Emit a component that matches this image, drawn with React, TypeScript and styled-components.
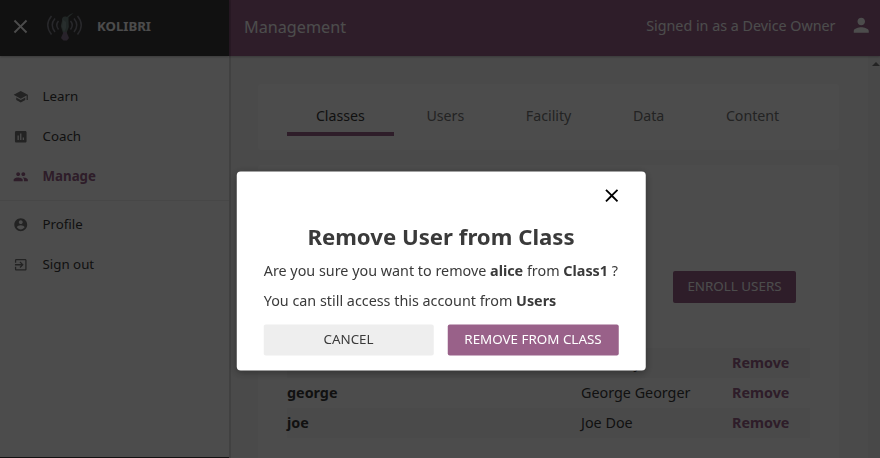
import React from "react";
import styled, { createGlobalStyle } from "styled-components";

const Global = createGlobalStyle`
  * { box-sizing: border-box; }
  html, body, #root { margin: 0; height: 100%; overflow: hidden; }
  body { font-family: "Noto Sans", sans-serif; font-size: 14.35px; color: #3a3a3a; background: #f9f9f9; }
  button { font-family: inherit; border: 0; padding: 0; }
`;

const Page = styled.div`
  display: flex;
  width: 880px;
  height: 458px;
`;

const Sidebar = styled.nav`
  position: relative;
  z-index: 2;
  display: flex;
  flex-direction: column;
  width: 229px;
  background: #fff;
  border-bottom: 1px solid #3a3a3a;
  box-shadow: 2px 0 0 rgba(0, 0, 0, 0.12);
`;

const Brand = styled.div`
  display: flex;
  align-items: center;
  height: 56px;
  padding: 0 0 4px 9px;
  background: #3a3a3a;
  color: #fff;
  box-shadow: 0 1px 2px rgba(0, 0, 0, 0.25);
  svg { flex: none; }
`;

const BrandName = styled.span`
  margin-left: 13px;
  font-size: 13.2px;
  font-weight: 700;
`;

const Logo = styled.svg`
  margin: 0 0 0 14px;
`;

const NavGroup = styled.div<{ $first?: boolean }>`
  display: flex;
  flex-direction: column;
  padding: ${(p) => (p.$first ? "19.4px 0 3.6px" : "3px 0 0")};
  border-bottom: ${(p) => (p.$first ? "1px solid #eee" : "0")};
`;

const NavItem = styled.a<{ $active?: boolean }>`
  display: flex;
  align-items: center;
  gap: 14px;
  height: 40.3px;
  padding-left: 13px;
  font-size: 13.3px;
  font-weight: ${(p) => (p.$active ? 700 : 400)};
  color: ${(p) => (p.$active ? "#996189" : "#3a3a3a")};
  svg { color: ${(p) => (p.$active ? "#996189" : "#757575")}; margin-top: 1.5px; }
`;

const Main = styled.main`
  display: flex;
  flex-direction: column;
  flex: 1;
  min-width: 0;
`;

const Header = styled.header`
  display: flex;
  align-items: center;
  justify-content: space-between;
  flex: none;
  z-index: 1;
  height: 56px;
  padding: 0 7.5px 5px 15px;
  background: #996189;
  color: #fff;
  box-shadow: 0 1px 2px rgba(0, 0, 0, 0.25);
`;

const HeaderTitle = styled.span`
  font-size: 16.2px;
  padding-top: 3px;
`;

const Account = styled.div`
  display: flex;
  align-items: center;
  gap: 14.5px;
  font-size: 14.3px;
`;

const Body = styled.div`
  display: flex;
  flex: 1;
  min-height: 0;
`;

const Content = styled.div`
  display: flex;
  flex-direction: column;
  gap: 15px;
  flex: 1;
  padding: 28px 29px 0;
  overflow: hidden;
`;

const Scrollbar = styled.div`
  width: 12px;
  background: #f1f1f1;
  display: flex;
  justify-content: center;
  padding: 6px 0 0 3px;
`;

const Card = styled.section`
  flex: none;
  background: #fff;
  border-radius: 4px;
  padding: 0 29px;
`;

const Tabs = styled(Card)`
  display: flex;
  gap: 3.8px;
  height: 66px;
  padding-top: 15px;
  font-size: 14.2px;
`;

const Tab = styled.a<{ $active?: boolean }>`
  height: 37px;
  padding: 6px 28.9px 0;
  line-height: 22px;
  color: ${(p) => (p.$active ? "#3a3a3a" : "#757575")};
  border-bottom: ${(p) => (p.$active ? "4px solid #996189" : "0")};
`;

const ClassCard = styled(Card)`
  display: flex;
  flex-direction: column;
  height: 320px;
  padding-top: 106px;
`;

const EnrollButton = styled.button`
  align-self: flex-end;
  width: 123px;
  height: 32px;
  margin: 0 14px 45px 0;
  padding-bottom: 2px;
  border-radius: 2px;
  background: #996189;
  color: #fff;
  font-size: 13.4px;
`;

const UserRow = styled.div<{ $shaded?: boolean }>`
  display: grid;
  grid-template-columns: 294px 151px 1fr;
  align-items: center;
  height: 30px;
  padding-bottom: 2px;
  background: ${(p) => (p.$shaded ? "#f7f7f7" : "transparent")};
  color: #3a3a3a;
`;

const Remove = styled.b`
  color: #996189;
`;

const Backdrop = styled.div`
  position: fixed;
  inset: 0;
  z-index: 5;
  display: grid;
  place-items: start center;
  padding: 171.5px 0 0 2px;
  background: rgba(0, 0, 0, 0.7);
`;

const Dialog = styled.div`
  display: flex;
  flex-direction: column;
  width: 409px;
  height: 199px;
  padding: 13.5px 27px 0 27.5px;
  border-radius: 4px;
  background: #fff;
  box-shadow: 0 2px 8px rgba(0, 0, 0, 0.33);
  white-space: nowrap;
  transform: translate(-0.25px, -0.4px);
`;

const CloseButton = styled.button`
  align-self: flex-end;
  display: flex;
  margin-right: -4px;
  background: none;
  color: #000;
`;

const Title = styled.h1`
  margin: 12.5px 0 0;
  text-align: center;
  font-size: 22.2px;
  line-height: 34px;
`;

const Message = styled.p`
  margin: 0;
  height: 30px;
  line-height: 34px;
`;

const Actions = styled.div`
  display: grid;
  grid-template-columns: 169.5px 170.5px;
  gap: 14.5px;
  margin-top: 11px;
`;

const ActionButton = styled.button<{ $primary?: boolean }>`
  height: 31px;
  padding-bottom: 2px;
  border-radius: 2px;
  background: ${(p) => (p.$primary ? "#996189" : "#eee")};
  color: ${(p) => (p.$primary ? "#fff" : "#3a3a3a")};
  font-size: 13.4px;
`;

const icons = {
  close: "M19 6.41L17.59 5 12 10.59 6.41 5 5 6.41 10.59 12 5 17.59 6.41 19 12 13.41 17.59 19 19 17.59 13.41 12z",
  school: "M5 13.18v4L12 21l7-3.82v-4L12 17l-7-3.82zM12 3L1 9l11 6 9-4.91V17h2V9L12 3z",
  chart: "M19 3H5c-1.1 0-2 .9-2 2v14c0 1.1.9 2 2 2h14c1.1 0 2-.9 2-2V5c0-1.1-.9-2-2-2zM9 17H7v-7h2v7zm4 0h-2V7h2v10zm4 0h-2v-4h2v4z",
  people: "M16 11c1.66 0 2.99-1.34 2.99-3S17.66 5 16 5s-3 1.34-3 3 1.34 3 3 3zm-8 0c1.66 0 2.99-1.34 2.99-3S9.66 5 8 5 5 6.34 5 8s1.34 3 3 3zm0 2c-2.33 0-7 1.17-7 3.5V19h14v-2.5c0-2.33-4.67-3.5-7-3.5zm8 0c-.29 0-.62.02-.97.05 1.16.84 1.97 1.97 1.97 3.45V19h6v-2.5c0-2.33-4.67-3.5-7-3.5z",
  account: "M12 2C6.48 2 2 6.48 2 12s4.48 10 10 10 10-4.48 10-10S17.52 2 12 2zm0 3c1.66 0 3 1.34 3 3s-1.34 3-3 3-3-1.34-3-3 1.34-3 3-3zm0 14.2c-2.5 0-4.71-1.28-6-3.22.03-1.99 4-3.08 6-3.08 1.99 0 5.97 1.09 6 3.08-1.29 1.94-3.5 3.22-6 3.22z",
  exit: "M10.09 15.59L11.5 17l5-5-5-5-1.41 1.41L12.67 11H3v2h9.67l-2.58 2.59zM19 3H5c-1.11 0-2 .9-2 2v4h2V5h14v14H5v-4H3v4c0 1.1.89 2 2 2h14c1.1 0 2-.9 2-2V5c0-1.1-.9-2-2-2z",
  person: "M12 12c2.21 0 4-1.79 4-4s-1.79-4-4-4-4 1.79-4 4 1.79 4 4 4zm0 2c-2.67 0-8 1.34-8 4v2h16v-2c0-2.66-5.33-4-8-4z",
};

function Icon({ name, size = 15.5 }: { name: keyof typeof icons; size?: number }) {
  return (
    <svg width={size} height={size} viewBox="0 0 24 24" fill="currentColor">
      <path d={icons[name]} />
    </svg>
  );
}

function KolibriLogo() {
  return (
    <Logo width="38" height="32" viewBox="0 0 38 32" fill="none">
      <g stroke="#85858f" strokeWidth="1.5">
        <path d="M5.5 6Q-2 15 5.5 24.5M9 8.5Q3.5 15 9 22M12.5 11Q9 15 12.5 19.5" />
        <path d="M31.5 6Q39 15 31.5 24.5M28 8.5Q33.5 15 28 22M24.5 11Q28 15 24.5 19.5" />
      </g>
      <path d="M27.5 3C24.5 4 22 5.5 21 7C17.5 5.5 15.5 8 16 11L14.8 16L17 23H20.5L22.8 17L22.5 10L22.5 7.3Z" fill="#71847f" />
      <path d="M17 10L16 17L18 22L20 18V12Z" fill="#879a97" />
      <path d="M17.5 22L15 28L17.5 30.5H21L23 28L20.5 22Z" fill="#88758f" />
    </Logo>
  );
}

const users = [
  { id: "alice", name: "Alice Cay" },
  { id: "george", name: "George Georger" },
  { id: "joe", name: "Joe Doe" },
];

export default function App() {
  return (
    <>
      <Global />
      <Page>
        <Sidebar>
          <Brand>
            <Icon name="close" size={23} />
            <KolibriLogo />
            <BrandName>KOLIBRI</BrandName>
          </Brand>
          <NavGroup $first>
            <NavItem><Icon name="school" />Learn</NavItem>
            <NavItem><Icon name="chart" />Coach</NavItem>
            <NavItem $active><Icon name="people" />Manage</NavItem>
          </NavGroup>
          <NavGroup>
            <NavItem><Icon name="account" />Profile</NavItem>
            <NavItem><Icon name="exit" />Sign out</NavItem>
          </NavGroup>
        </Sidebar>
        <Main>
          <Header>
            <HeaderTitle>Management</HeaderTitle>
            <Account>
              Signed in as a Device Owner
              <Icon name="person" size={22.5} />
            </Account>
          </Header>
          <Body>
            <Content>
              <Tabs>
                {["Classes", "Users", "Facility", "Data", "Content"].map((t, i) => (
                  <Tab key={t} $active={i === 0}>{t}</Tab>
                ))}
              </Tabs>
              <ClassCard>
                <EnrollButton>ENROLL USERS</EnrollButton>
                {users.map((u, i) => (
                  <UserRow key={u.id} $shaded={i % 2 === 0}>
                    <b>{u.id}</b>
                    <span>{u.name}</span>
                    <Remove>Remove</Remove>
                  </UserRow>
                ))}
              </ClassCard>
            </Content>
            <Scrollbar>
              <svg width="8" height="4" viewBox="0 0 8 4"><path d="M0 4L4 0L8 4Z" fill="#777" /></svg>
            </Scrollbar>
          </Body>
        </Main>
      </Page>
      <Backdrop>
        <Dialog>
          <CloseButton aria-label="Close"><Icon name="close" size={22} /></CloseButton>
          <Title>Remove User from Class</Title>
          <Message>Are you sure you want to remove <b>alice</b> from <b>Class1</b> ?</Message>
          <Message>You can still access this account from <b>Users</b></Message>
          <Actions>
            <ActionButton>CANCEL</ActionButton>
            <ActionButton $primary>REMOVE FROM CLASS</ActionButton>
          </Actions>
        </Dialog>
      </Backdrop>
    </>
  );
}
